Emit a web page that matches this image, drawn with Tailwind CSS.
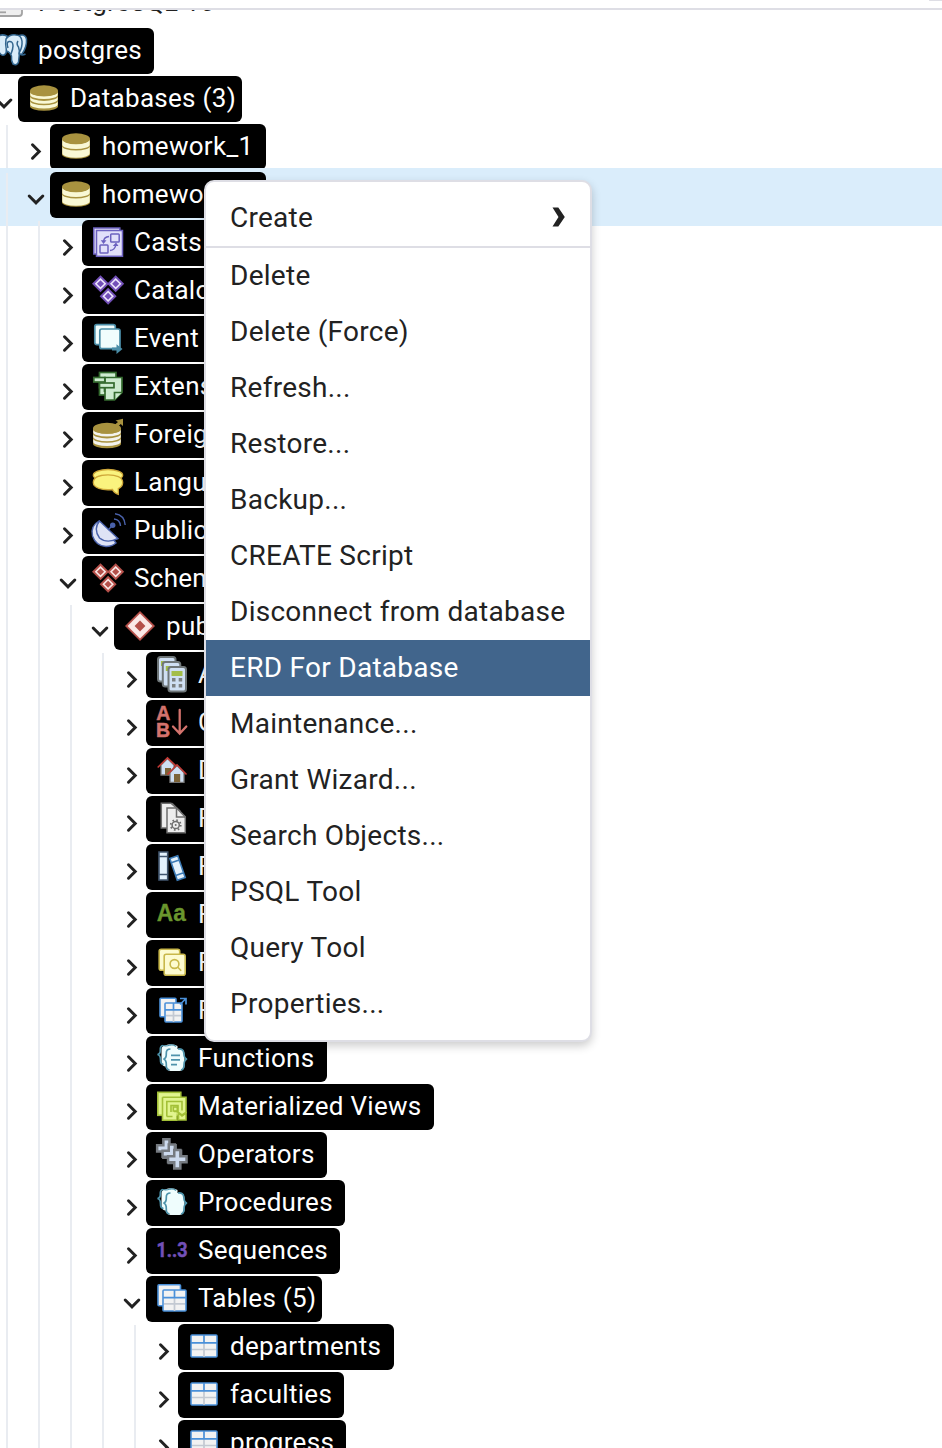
<!DOCTYPE html>
<html lang="en">
<head>
<meta charset="utf-8">
<title>pgAdmin</title>
<script src="https://cdn.jsdelivr.net/npm/@tailwindcss/browser@4"></script>
</head>
<body class="relative h-[1448px] w-[942px] overflow-hidden bg-white font-['Roboto','Liberation_Sans',sans-serif] text-[#222]">
<header class="flex h-[10px] justify-end border-b-2 border-[#dedee5]"><div class="h-px w-[13px] rounded-l bg-[#dedee5]"></div></header>
<main class="h-[1438px] overflow-hidden"><div id="tree" class="-mt-[34px] flex flex-col"></div></main>

<nav class="absolute top-[180px] left-[204px] flex w-[388px] flex-col rounded-[10px] border-2 border-[#dedee5] bg-white py-2 text-[28px] leading-[56px] tracking-[0.27px] shadow-[0_4px_10px_rgba(0,0,0,0.2)]">
  <div class="flex h-14 justify-between pr-[25px] pl-6"><span>Create</span>
    <svg class="mt-[17px] h-[20px] w-[13px]" viewBox="0 0 13 20"><path d="M.5 .5H6.300L12.800 10 6.300 19.500H.5L6.500 10Z" fill="#222"/></svg></div>
  <div class="h-0.5 bg-[#dedee5]"></div>
  <div class="h-14 px-6">Delete</div>
  <div class="h-14 px-6">Delete (Force)</div>
  <div class="h-14 px-6">Refresh...</div>
  <div class="h-14 px-6">Restore...</div>
  <div class="h-14 px-6">Backup...</div>
  <div class="h-14 px-6">CREATE Script</div>
  <div class="h-14 px-6 whitespace-nowrap">Disconnect from database</div>
  <div class="h-14 bg-[#41658c] px-6 text-white">ERD For Database</div>
  <div class="h-14 px-6">Maintenance...</div>
  <div class="h-14 px-6">Grant Wizard...</div>
  <div class="h-14 px-6">Search Objects...</div>
  <div class="h-14 px-6">PSQL Tool</div>
  <div class="h-14 px-6">Query Tool</div>
  <div class="h-14 px-6">Properties...</div>
</nav>

<script>
const diamond = (x, y, r, c, f, a = .68, b = .42) => `<path d="M${x} ${y-r}L${x+r} ${y} ${x} ${y+r} ${x-r} ${y}Z" fill="${c}"/><path d="M${x} ${y-r*a}L${x+r*a} ${y} ${x} ${y+r*a} ${x-r*a} ${y}Z" fill="${f}"/><path d="M${x} ${y-r*b}L${x+r*b} ${y} ${x} ${y+r*b} ${x-r*b} ${y}Z" fill="${c}"/>`;
const trio = (c, f) => diamond(8.5,9.7,8.5,c,f) + diamond(23.7,9.7,8.5,c,f) + diamond(16.1,22.3,8.5,c,f);
const gold = '#a8923f';
const cylinder = (bands, cream) => `<path d="M2 9V24.300A14 4.400 0 0 0 30 24.300V9Z" fill="${gold}"/>`
  + bands.map(([a, b]) => `<path d="M2.300 ${a}A13.700 4.400 0 0 0 29.700 ${a}V${b}A13.700 4.400 0 0 1 2.300 ${b}Z" fill="${cream}"/>`).join('')
  + `<ellipse cx="16" cy="8.800" rx="14" ry="5.500" fill="${gold}"/>`;
const three = [[9.900, 12.700], [14.500, 17.300], [18.900, 22.200]];
const two = [[9.300, 14.700], [16.200, 23.300]];
const grid = (x, y, w, h) => `<rect x="${x}" y="${y}" width="${w}" height="${h}" rx="1" fill="#f2f2f2" stroke="#4a90d9" stroke-width="1.6"/><path d="M${x+w/2} ${y+h/3}V${y+h}M${x+1} ${y+h*.66}H${x+w-1}" stroke="#c3c9d2" stroke-width="1.7"/><path d="M${x} ${y+h*.36}H${x+w}M${x+w/2} ${y}V${y+h*.36}" stroke="#4a90d9" stroke-width="1.7"/>`;
const braces = (lines) => `<g fill="#effdfd"><path d="M9 3.5Q16 1 21.5 4V20L9 24.500Q6 24 5.500 20V7Q5.500 4 9 3.500Z"/><path d="M7 3.500Q4 4 4.300 8 4.500 12 1.500 12.500 4.500 13 4.500 18 4.300 22 7.500 22.500" stroke="#4d93ab" stroke-width="1.700" fill="none"/><path d="M7 3.500Q10 4.500 14 3 18 2.300 20 4.500" stroke="#4d93ab" stroke-width="1.300" fill="none"/><rect x="9.500" y="7" width="19" height="22" rx="5"/><path d="M14.500 7Q10 7 10.300 11.500 10.500 16.500 7.500 17 10.500 18 10.300 23 10 27.500 13.500 28M22 7Q27.500 6.500 27.800 11 28 16.500 31 17 28 18 28 23 28 27.500 25 28" stroke="#4d93ab" stroke-width="1.700" fill="none"/></g>${lines ? '<path d="M15 13.300H24M15 17.900H24M15 22.700H21" stroke="#4d93ab" stroke-width="1.700"/>' : ''}`;
const plus = (x, y) => `<path d="M${x} ${y-10.500}V${y+10.500}M${x-10.500} ${y}H${x+10.500}" stroke="#757a80" stroke-width="8.600"/><path d="M${x} ${y-8}V${y+8}M${x-8} ${y}H${x+8}" stroke="#ccdaee" stroke-width="3.600"/>`;
const calc = (x, y) => `<rect x="${x}" y="${y}" width="17.500" height="24.500" rx="2.500" fill="#cfdff3" stroke="#6f7678" stroke-width="2"/><path d="M${x+3} ${y+6.500}h11" stroke="#a3bd49" stroke-width="5"/>`;

const icons = {
  server: '<rect x="-10" y="4" width="36" height="26" rx="3" fill="#efefef" stroke="#a3a3a3" stroke-width="1.800"/><path d="M4 26.300H10" stroke="#a3a3a3" stroke-width="1.800"/>',
  elephant: '<g fill="#d9ecf9" stroke="#33668f" stroke-width="1.500" stroke-linejoin="round"><path d="M11 2Q4 -1 1 4-1 11 3 18 7 24 10 19L11 14Z"/><path d="M22 2Q29 -1 30.500 5 31 13 26 20 23 21 21 17Z"/><path d="M10 5Q14 0 20 1 25 1 26 7 26.500 13 23.500 18 23 24 22.500 28 21 32 17 30 15 27 15.500 22 14 18 10.500 17 9 10 10 5Z"/><path d="M12 14Q10 8 13 7.500 17 7 17 12 17 15 15 20M22 7Q20 10 22.500 13 24 17 23 20 26 22 29.500 20" fill="none"/></g>',
  db3: cylinder(three, '#f9f8d5'), db2: cylinder(two, '#f9f8d5'),
  casts: '<g fill="#e2e0fa" stroke="#6c61bf" stroke-width="1.500"><rect x="1.800" y="2" width="26" height="26"/><rect x="4.500" y="4.500" width="26" height="25.800"/><rect x="18.700" y="8" width="8.500" height="8" rx=".8"/><rect x="8" y="19" width="8" height="8" rx=".8"/><path d="M17 10.500Q12 11 11.700 15M18 24.500Q23 24 23.800 19" fill="none"/></g><path d="M8.800 14.300H14.500L11.500 18ZM20.800 20H26.500L24 16.500Z" fill="#6c61bf"/>',
  catalogs: trio('#7350b8', '#ece6fb'),
  event: '<g fill="#f0fdfd" stroke="#4b8ea8" stroke-width="1.700"><rect x="2.800" y="2.700" width="20.500" height="20" rx="2"/><rect x="7.800" y="7" width="20.200" height="19.700" rx="2"/></g><path d="M20 25.500H24.500V22.300L30.500 27 24.500 32V28.500H20Z" fill="#4b8ea8"/>',
  ext: '<g fill="#cdebd0" stroke="#346b2f" stroke-width="1.700"><rect x="7.500" y="2.500" width="16.500" height="22.500"/><path d="M13 7.500H30V22.500L22.500 30H13Z"/><rect x="1.800" y="7.500" width="11" height="4.500"/><rect x="7.500" y="13" width="14.500" height="4.700"/><path d="M12.500 17.700V22M22.500 30V22.500H30"/></g>',
  foreign: `<g transform="translate(-1 1.500)">${cylinder(three, '#f3f3ee')}</g><path d="M23.500 2.500 31 .7V8L28.700 6 25.500 9 23 6.500 26 4Z" fill="${gold}"/>`,
  lang: '<g fill="#faf37e" stroke="#cfa83a" stroke-width="1.300"><ellipse cx="16" cy="9.300" rx="14.700" ry="5.800"/><path d="M1.300 16.500C1.300 11 8 8.800 16 8.800S30.700 11 30.700 16.500C30.700 19.500 29 21.500 26.300 22.700V28.300Q21.500 26.500 20.500 23.500C10 24.500 1.300 22 1.300 16.500Z"/></g>',
  pub: '<g fill="#dfe3f5" stroke="#4a62ab" stroke-width="1.400"><path d="M7 7Q-2 12 .5 22 4 32 14 32.500 20 32.500 24 29Z"/><path d="M7.500 7Q1 15 7.500 24 15 30 26 24.500Z"/><path d="M16 16 20 12M22 5Q28 5.500 28.500 12M23 -.3Q32.500 1 33.200 11" fill="none"/></g><circle cx="20.700" cy="11.300" r="2.700" fill="#4a62ab"/>',
  schemas: trio('#b5504a', '#fbe9e7'), schema: diamond(16, 16, 15, '#b5504a', '#fbe9e7', .83, .36),
  agg: calc(2,-1) + calc(6.800,4) + calc(12.500,9) + '<path d="M16 21.700h3.500m3.200 0h3.500M16 27.700h3.500m3.200 0h3.500" stroke="#7c8082" stroke-width="3.400"/>',
  coll: '<g fill="#d4736d" stroke="#d4736d" stroke-width=".5" font-family="Liberation Sans" font-weight="700" font-size="19.500" letter-spacing="0"><text x=".3" y="13.700">A</text><text x="0" y="30.700">B</text></g><path d="M23.700 4V27M17 20.500 23.700 27.500 30.300 20.500" fill="none" stroke="#d4736d" stroke-width="2.300" stroke-linecap="round"/>',
  dom: '<path d="M5 11 11.500 4.500 18 11V21H5Z" fill="#cfdff3" stroke="#777" stroke-width="1.300"/><path d="M9 14h6v7H9Z" fill="#7c6338"/><path d="M1.700 13.500 11.500 3.800 20 12" stroke="#c43a36" stroke-width="1.600" fill="none"/><path d="M14 18.500 21 11.500 28 18.500V28.300H14Z" fill="#cfdff3" stroke="#777" stroke-width="1.300"/><path d="M18 20h6.200v8H18Z" fill="#7c6338"/><path d="M11.500 20.500 21 10.800 30.500 20.500" stroke="#c43a36" stroke-width="1.600" fill="none"/>',
  ftsc: '<g fill="#ededed" stroke="#6e6e6e" stroke-width="1.500"><path d="M5.300 1.200H15L24 9V26H5.300Z"/><path d="M11 6H20.500L29.300 15V30.800H11Z"/><path d="M20.500 6V15H29.300"/><path d="M16 1.200 29.300 15" fill="none"/><circle cx="19.700" cy="23" r="3.600"/><circle cx="19.700" cy="23" r="5" fill="none" stroke-width="1.800" stroke-dasharray="1.600 2.330"/></g><circle cx="19.700" cy="23" r="1" fill="#6e6e6e"/>',
  ftsd: '<g fill="#e3f1fb" stroke="#41566e" stroke-width="1.600"><path d="M3 2H11.700V30H3ZM3 6.500H11.700M3 24.500H11.700"/><path d="M17.300 6.500H25.700V29.500H17.300ZM17.300 11H25.700M17.300 24.500H25.700" stroke="#3b7ab5" transform="rotate(-19 21.500 18)"/></g>',
  ftsp: '<text x=".8" y="22.800" fill="#6a962d" stroke="#6a962d" stroke-width=".3" font-family="Liberation Sans" font-weight="700" font-size="23" letter-spacing="0" textLength="29" lengthAdjust="spacingAndGlyphs">Aa</text>',
  ftst: '<g fill="#fdfbd0" stroke="#c9b84b" stroke-width="1.600"><rect x="3.200" y="3.300" width="20.500" height="21" rx="2"/><rect x="8.200" y="8.300" width="21" height="21" rx="2"/><circle cx="18.500" cy="18" r="4.400"/><path d="M21.800 21.300 25.200 24.700"/></g>',
  ftab: '<rect x="4" y="4.300" width="16" height="18.500" rx="1" fill="#f2f2f2" stroke="#4a90d9" stroke-width="1.600"/>' + grid(9, 9, 17, 19) + '<path d="M24 10.500 29.500 5M24 4.500H30V10.500" stroke="#4a90d9" stroke-width="1.700" fill="none"/>',
  func: braces(true), proc: braces(false),
  mview: '<g fill="#e1f48f" stroke="#a3c037" stroke-width="1.600"><rect x="1.800" y="2.300" width="23" height="23"/><path d="M6.500 7.300H30V22.500L26 25 22.500 22.500H20M6.500 7.300V30.200H21V25.500" /><path d="M10.800 26.500V11.500H26V20.500M16.500 26.500H10.800M15 22V15.500H22V21.500H18" /><rect x="17.300" y="17" width="4" height="4"/><path d="M22.500 23 26 26 30 23V30H22.500Z"/></g>',
  oper: plus(10.400,10.400) + plus(15.800,15.800) + plus(21.300,21.300),
  seq: '<text x=".5" y="23" fill="#7350b8" stroke="#7350b8" stroke-width=".5" font-family="Roboto" font-weight="700" font-size="19.500" letter-spacing="0" textLength="31" lengthAdjust="spacingAndGlyphs">1..3</text>',
  tables: '<rect x="2" y="2.700" width="22.500" height="21" rx="1" fill="#f2f2f2" stroke="#4a90d9" stroke-width="1.600"/>' + grid(7, 8, 23, 21),
  table: grid(3, 5, 26, 22),
};

// [depth, arrow, icon, label, label box width, selected]
const rows = [
  [0,'','server','PostgreSQL 16',240], [0,'','elephant','postgres',168], [1,'v','db3','Databases (3)',224],
  [2,'>','db2','homework_1',216], [2,'v','db2','homework_2',216,true],
  [3,'>','casts','Casts',130], [3,'>','catalogs','Catalogs',166], [3,'>','event','Event Triggers',240],
  [3,'>','ext','Extensions',194], [3,'>','foreign','Foreign Data Wrappers',330], [3,'>','lang','Languages',186],
  [3,'>','pub','Publications',206], [3,'v','schemas','Schemas (1)',206], [4,'v','schema','public',136],
  [5,'>','agg','Aggregates',196], [5,'>','coll','Collations',182], [5,'>','dom','Domains',166],
  [5,'>','ftsc','FTS Configurations',286], [5,'>','ftsd','FTS Dictionaries',250], [5,'>','ftsp','FTS Parsers',200],
  [5,'>','ftst','FTS Templates',230], [5,'>','ftab','Foreign Tables',232], [5,'>','func','Functions',181],
  [5,'>','mview','Materialized Views',288], [5,'>','oper','Operators',181], [5,'>','proc','Procedures',199],
  [5,'>','seq','Sequences',194], [5,'v','tables','Tables (5)',176], [6,'>','table','departments',216],
  [6,'>','table','faculties',166], [6,'>','table','progress',168],
];
const chevron = a => `<svg class="mt-[15px] -ml-2 mr-[2px] h-6 w-6 shrink-0" viewBox="0 0 24 24"><path d="${a === 'v' ? 'M5.200 9 12 15.800 18.800 9' : 'M8.500 5.800 15.200 12.500 8.500 19.200'}" fill="none" stroke="#222" stroke-width="3" stroke-linecap="round"/></svg>`;
document.getElementById('tree').innerHTML = rows.map(([d, a, ic, label, w, sel], i) => `
<div class="flex shrink-0 items-start pt-1 ${sel ? '-mb-[10px] h-[58px] bg-[#daedfb]' : 'h-12'}">
  ${'<span class="h-[48px] w-8 shrink-0 pl-[6px]"><span class="mt-px block h-full w-[2px] bg-[#e9ecf1]"></span></span>'.repeat(Math.max(0, d - 1))}
  ${d ? chevron(a) : '<span class="-ml-[14px]"></span>'}
  <div class="flex h-[46px] shrink-0 items-center gap-[10px] rounded-[6px] pb-[2px] pl-[10px] text-[26px] tracking-[0.29px] whitespace-nowrap ${i ? 'bg-black text-white' : ''}" style="width:${w}px">
    <svg class="h-8 w-8 shrink-0 overflow-visible" viewBox="0 0 32 32">${icons[ic]}</svg><span>${label}</span>
  </div>
</div>`).join('');
</script>
</body>
</html>
